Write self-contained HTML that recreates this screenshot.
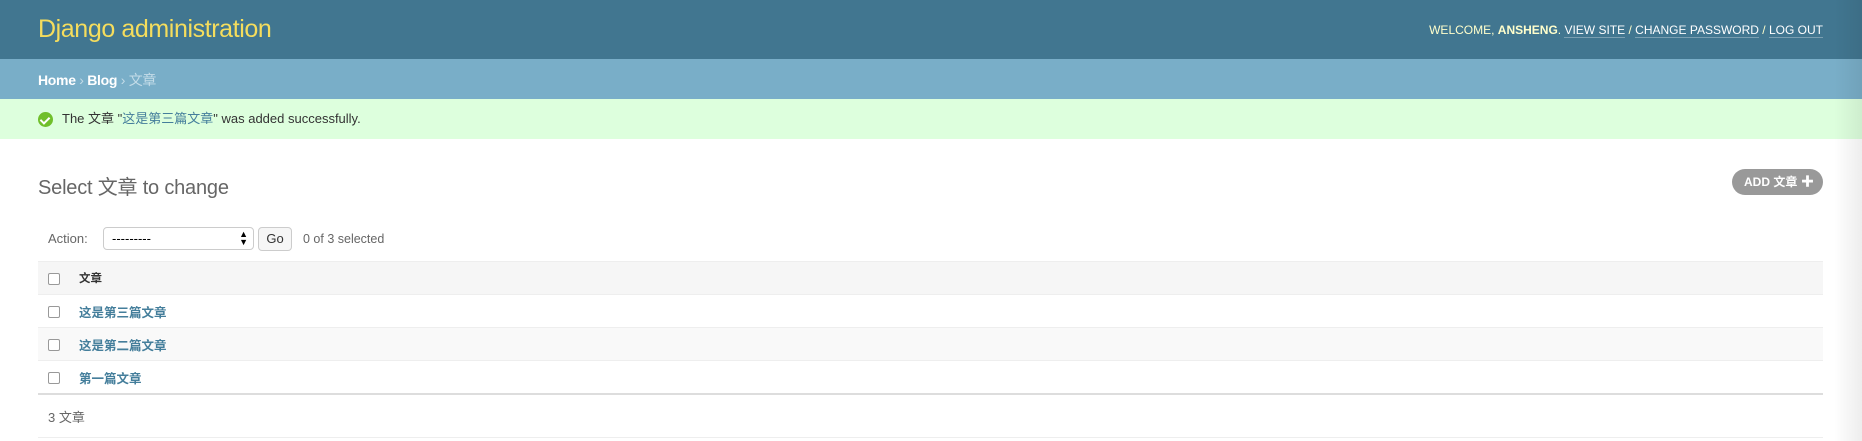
<!DOCTYPE html>
<html><head><meta charset="utf-8"><style>
*{margin:0;padding:0;box-sizing:border-box}
body{width:1862px;height:441px;overflow:hidden;background:#fff;font-family:"Liberation Sans","Noto Sans CJK SC",sans-serif;color:#333;position:relative}
.hdr{height:59px;background:#417690;position:relative}
.hdr h1{position:absolute;left:38px;top:15px;font-size:25px;font-weight:normal;color:#f5dd5d;letter-spacing:-0.4px}
.ut{position:absolute;right:39px;top:23px;font-size:12px;color:#ffc;letter-spacing:0}
.ut a{color:#fff;text-decoration:none;border-bottom:1px solid rgba(255,255,255,0.3)}
.bc{height:40px;background:#79aec8;color:#c4dce8;font-size:14px;padding:11px 38px;letter-spacing:-0.3px}
.bc b{color:#fff}
.msg{height:40px;background:#dfd;font-size:13px;padding-left:38px;display:flex;align-items:center;gap:9px;line-height:14px}
.msg a{color:#447e9b;text-decoration:none}
.ic{width:15px;height:15px;border-radius:50%;background:#70bf2b;display:inline-block;position:relative}
.ic:after{content:"";position:absolute;left:4px;top:3px;width:4px;height:7px;border:solid #fff;border-width:0 2px 2px 0;transform:rotate(45deg)}
h2{position:absolute;left:38px;top:171px;font-size:20px;font-weight:normal;color:#666;letter-spacing:-0.2px}
.add{position:absolute;left:1732px;top:169px;width:91px;height:26px;border-radius:13px;background:#999;color:#fff;font-size:12px;font-weight:bold;line-height:26px;padding-left:12px}
.add span{position:absolute;right:9px;top:0;font-size:13px}
.act{position:absolute;top:227px;left:48px;font-size:13px;color:#666;display:flex;align-items:center;height:23px}
.sel{position:absolute;left:103px;top:227px;width:151px;height:23px;border:1px solid #ccc;border-radius:4px;font-size:13px;padding:3px 8px;color:#000}
.sel i{position:absolute;right:5px;top:2px;font-size:9px;font-style:normal;line-height:8px}
.go{position:absolute;left:258px;top:227px;width:34px;height:24px;border:1px solid #ccc;border-radius:4px;background:#f6f6f6;font-size:13px;text-align:center;line-height:22px}
.cnt{position:absolute;left:303px;top:232px;font-size:12.5px;color:#666}
.tbl{position:absolute;left:38px;top:261px;width:1785px}
.row{height:33px;border-top:1px solid #eee;position:relative;font-size:12.5px;font-weight:bold}
.row.h{background:#f6f6f6;color:#333;font-size:11.5px}
.row.alt{background:#f9f9f9}
.row .cb{position:absolute;left:10px;top:11px;width:12px;height:12px;border:1px solid #999;border-radius:2px;background:#fff}
.row span{position:absolute;left:41px;top:7px;color:#447e9b}
.row.h span{color:#333;top:8px}
.bt{position:absolute;left:38px;top:393px;width:1785px;height:2px;background:#ddd}
.ft{position:absolute;left:48px;top:407px;font-size:13px;color:#666}
.bl{position:absolute;left:38px;top:437px;width:1785px;height:1px;background:#eee}
.sh{position:absolute;right:0;top:0;width:28px;height:441px;background:linear-gradient(to right,rgba(0,0,0,0),rgba(0,0,0,0.07))}
</style></head><body>
<div class="hdr"><h1>Django administration</h1>
<div class="ut">WELCOME, <b>ANSHENG</b>. <a>VIEW SITE</a> / <a>CHANGE PASSWORD</a> / <a>LOG OUT</a></div></div>
<div class="bc"><b>Home</b> › <b>Blog</b> › 文章</div>
<div class="msg"><span class="ic"></span><span>The 文章 "<a>这是第三篇文章</a>" was added successfully.</span></div>
<h2>Select 文章 to change</h2>
<div class="add">ADD 文章<span>✚</span></div>
<div class="act">Action:</div>
<div class="sel">---------<i>▲<br>▼</i></div>
<div class="go">Go</div>
<div class="cnt">0 of 3 selected</div>
<div class="tbl">
<div class="row h"><div class="cb"></div><span>文章</span></div>
<div class="row"><div class="cb"></div><span>这是第三篇文章</span></div>
<div class="row alt"><div class="cb"></div><span>这是第二篇文章</span></div>
<div class="row"><div class="cb"></div><span>第一篇文章</span></div>
</div>
<div class="bt"></div>
<div class="ft">3 文章</div>
<div class="bl"></div>
<div class="sh"></div>
</body></html>
